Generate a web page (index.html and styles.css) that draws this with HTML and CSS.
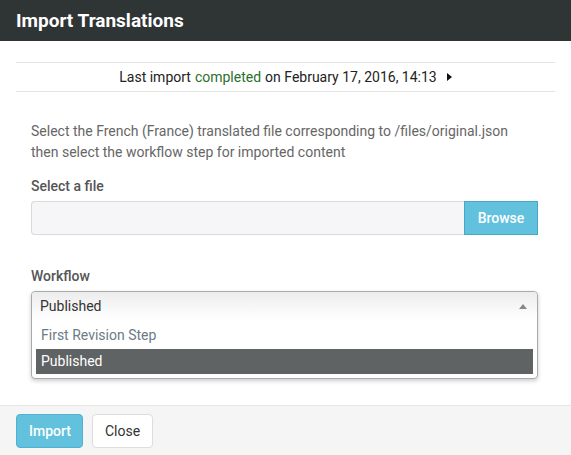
FILE: index.html
```html
<!DOCTYPE html>
<html>
<head>
<meta charset="utf-8">
<link rel="stylesheet" href="styles.css">
</head>
<body>
<div class="modal">
  <div class="modal-header"><h1 class="title">Import Translations</h1></div>
  <div class="modal-body">
    <div class="status">Last import <span class="ok">completed</span> on February 17, 2016, 14:13 <span class="caret"></span></div>
    <div class="form">
      <p class="desc">Select the French (France) translated file corresponding to /files/original.json then select the workflow step for imported content</p>
      <label class="label">Select a file</label>
      <div class="input-group">
        <div class="file-input"></div>
        <button class="btn-browse">Browse</button>
      </div>
      <label class="label label-wf">Workflow</label>
      <div class="chosen">
        <div class="chosen-single"><span>Published</span><span class="arrow"></span></div>
        <ul class="chosen-results">
          <li class="opt">First Revision Step</li>
          <li class="opt hl">Published</li>
        </ul>
      </div>
    </div>
  </div>
  <div class="modal-footer">
    <button class="btn btn-primary">Import</button>
    <button class="btn btn-default">Close</button>
  </div>
</div>
</body>
</html>
```
FILE: styles.css
```css
* { box-sizing: border-box; }
html, body { margin: 0; padding: 0; background: #fff; }
body { font-family: Roboto, "Liberation Sans", sans-serif; font-size: 14px; color: #555; width: 571px; height: 455px; overflow: hidden; }
.modal { display: flex; flex-direction: column; height: 455px; }
.modal-header { height: 41px; background: #2f3435; padding: 0 16px; display: flex; align-items: center; }
.title { margin: 0; font-size: 19px; font-weight: 700; color: #fff; }
.modal-body { flex: 1; padding: 21px 16px 0; }
.status { height: 30px; border-top: 1px solid #e3e3e3; border-bottom: 1px solid #e3e3e3; display: flex; align-items: center; justify-content: center; color: #222; font-size: 14px; }
.ok { color: #2a6f2a; margin: 0 4px; }
.caret { display: inline-block; width: 0; height: 0; border-left: 5px solid #111; border-top: 4.5px solid transparent; border-bottom: 4.5px solid transparent; margin-left: 10px; }
.form { padding: 0 17px 0 15px; }
.desc { margin: 29px 0 0; line-height: 21px; color: #666; }
.label { display: block; margin-top: 13px; font-weight: 500; color: #555; line-height: 20px; }
.input-group { display: flex; margin-top: 5px; height: 34px; }
.file-input { flex: 1; background: #f6f6f8; border: 1px solid #d9d9d9; border-right: none; border-radius: 4px 0 0 4px; }
.btn-browse { width: 74px; background: #62c1dd; border: 1px solid #45a8c6; color: #fff; font-family: inherit; font-size: 14px; font-weight: 500; padding: 0; }
.label-wf { margin-top: 31px; }
.chosen { margin-top: 5px; border: 1px solid #aaa; border-radius: 4px; box-shadow: 0 2px 4px rgba(0,0,0,0.2); background: #fff; padding-bottom: 4px; }
.chosen-single { height: 28px; display: flex; align-items: center; justify-content: space-between; padding: 0 10px 0 8px; background: linear-gradient(#ececec 0%, #f8f8f8 60%, #fff 100%); color: #333; border-radius: 4px 4px 0 0; }
.arrow { width: 0; height: 0; border-bottom: 5px solid #888; border-left: 4px solid transparent; border-right: 4px solid transparent; }
.chosen-results { list-style: none; margin: 2px 4px 0; padding: 0; }
.opt { height: 27px; line-height: 27px; padding: 0 5px; color: #6b7b85; }
.opt.hl { background: #606363; color: #fff; height: 25px; line-height: 25px; }
.modal-footer { height: 50px; background: #f5f5f5; border-top: 1px solid #e5e5e5; padding: 8px 16px; display: flex; gap: 9px; }
.btn { height: 34px; border-radius: 4px; font-family: inherit; font-size: 14px; padding: 0 12px; }
.btn-primary { width: 67px; background: #62c1dd; border: 1px solid #4fb0cf; color: #fff; font-weight: 500; }
.btn-default { width: 61px; background: #fff; border: 1px solid #ddd; color: #333; }
```
